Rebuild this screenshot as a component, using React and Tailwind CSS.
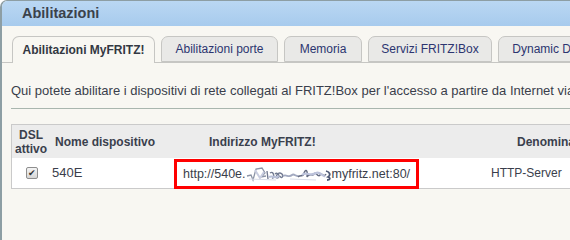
const tabs = [
    { label: 'Abilitazioni MyFRITZ!', w: 'w-[143px]', active: true },
    { label: 'Abilitazioni porte', w: 'w-[117px]' },
    { label: 'Memoria', w: 'w-[78px]' },
    { label: 'Servizi FRITZ!Box', w: 'w-[124px]' },
    { label: 'Dynamic DNS', w: 'w-[104px]' },
];

// blurred / obfuscated part of the address
function Scribble() {
    return (
        <svg width="88" height="18" viewBox="0 0 88 18" className="shrink-0">
            <path d="M1 11 L5 10 L7 15 L10 4 L16 3 L19 8 L15 12 L20 11" fill="none" stroke="#8b93a6" strokeWidth="1.3" />
            <path d="M9 5 L14 13 L18 7" fill="none" stroke="#c8cde0" strokeWidth="2" />
            <path d="M21 6 L22 14 M24 8 C28 5 29 14 26 13 M29 9 C32 6 35 13 31 13 C29 12 32 6 36 9 C38 12 35 14 34 11" fill="none" stroke="#737b92" strokeWidth="1.4" />
            <path d="M23 12 C27 10 30 14 33 11" fill="none" stroke="#b9c0d8" strokeWidth="2.2" />
            <path d="M37 11 C40 9 43 13 46 10 C48 8 50 12 53 11" fill="none" stroke="#a2a9c0" strokeWidth="1.8" />
            <path d="M52 12 C55 9 57 13 58 8 C60 3 62 6 61 12 C64 7 66 12 68 9 C70 6 72 13 74 10 C76 7 78 13 80 9" fill="none" stroke="#656c82" strokeWidth="1.4" />
            <path d="M56 10 C60 6 64 12 70 8 C74 6 77 12 79 11" fill="none" stroke="#bcc2da" strokeWidth="2.2" />
            <path d="M80 6 C84 7 85 10 82 12 C85 13 84 15 81 15" fill="none" stroke="#4f5a76" strokeWidth="1.8" />
            <path d="M3 14 L30 15 M44 14 L70 15" fill="none" stroke="#d8dce8" strokeWidth="1.2" />
        </svg>
    );
}

export default function App() {
    return (
        <div className="w-[570px] h-[240px] overflow-hidden bg-[#f8f7f2] border-l-2 border-t border-[#8d9ea4] rounded-tl-[7px] font-['Liberation_Sans',Arial,sans-serif] text-[12px] text-[#3a3e4b]">
            {/* title bar */}
            <div className="h-[25px] flex items-center pl-[20px] bg-gradient-to-b from-[#bad7f3] to-[#a7cbed] text-[14.5px] font-bold text-[#3b424b]">
                Abilitazioni
            </div>

            {/* tabs */}
            <div className="mt-[10px] flex items-end gap-[6px] pl-[10px] border-b border-[#c6c6c3] h-[27px]">
                {tabs.map(t => (
                    <div
                        key={t.label}
                        className={`${t.w} shrink-0 flex items-center justify-center rounded-t-[7px] border border-[#c6c6c3] whitespace-nowrap ${t.active
                            ? 'h-[27px] -mb-px border-b-0 bg-[#f8f7f2] font-bold text-[#333842]'
                            : 'h-[26px] bg-[#e9e9e7] text-[#2c3570]'}`}
                    >
                        {t.label}
                    </div>
                ))}
            </div>

            <div className="pl-[9px]">
                <p className="mt-[21px] leading-[14px] whitespace-nowrap text-[13px]">
                    Qui potete abilitare i dispositivi di rete collegati al FRITZ!Box per l'accesso a partire da Internet via
                </p>
                <div className="mt-[10px] h-px bg-[#a9b6ae]"></div>

                {/* table */}
                <div className="mt-[15px] w-[720px]">
                    <div className="flex h-[34px] bg-[#ececec] border-t border-l border-[#cacaca] font-bold text-[#3a404d]">
                        <div className="w-[35px] shrink-0 flex flex-col items-center justify-center leading-[14px] pl-[3px]">
                            <span>DSL</span>
                            <span>attivo</span>
                        </div>
                        <div className="w-[127px] shrink-0 flex items-center pl-[8px]">Nome dispositivo</div>
                        <div className="w-[245px] shrink-0 flex items-center pl-[35px]">Indirizzo MyFRITZ!</div>
                        <div className="flex items-center pl-[98px]">Denominazione</div>
                    </div>
                    <div className="flex h-[31px] bg-white border-l border-b border-[#cacaca]">
                        <div className="w-[35px] shrink-0 flex items-center pl-[14px]">
                            <span className="w-[12px] h-[12px] rounded-[2px] border border-[#8e8e8e] bg-gradient-to-b from-[#f4f4f4] to-[#d6d6d6] flex items-center justify-center text-[9px] leading-none text-[#333]">✔</span>
                        </div>
                        <div className="w-[127px] shrink-0 flex items-center pl-[5px] text-[13px]">540E</div>
                        <div className="w-[245px] h-[30px] mt-px shrink-0 border-[3px] border-[#f00] flex items-center pl-[6px] text-[12.5px] text-[#3a3e4b] whitespace-nowrap">
                            <span>http://540e.</span>
                            <Scribble />
                            <span className="-ml-[2px]">myfritz.net:80/</span>
                        </div>
                        <div className="flex items-center pl-[72px] text-[12px]">HTTP-Server</div>
                    </div>
                </div>
            </div>
        </div>
    );
}
